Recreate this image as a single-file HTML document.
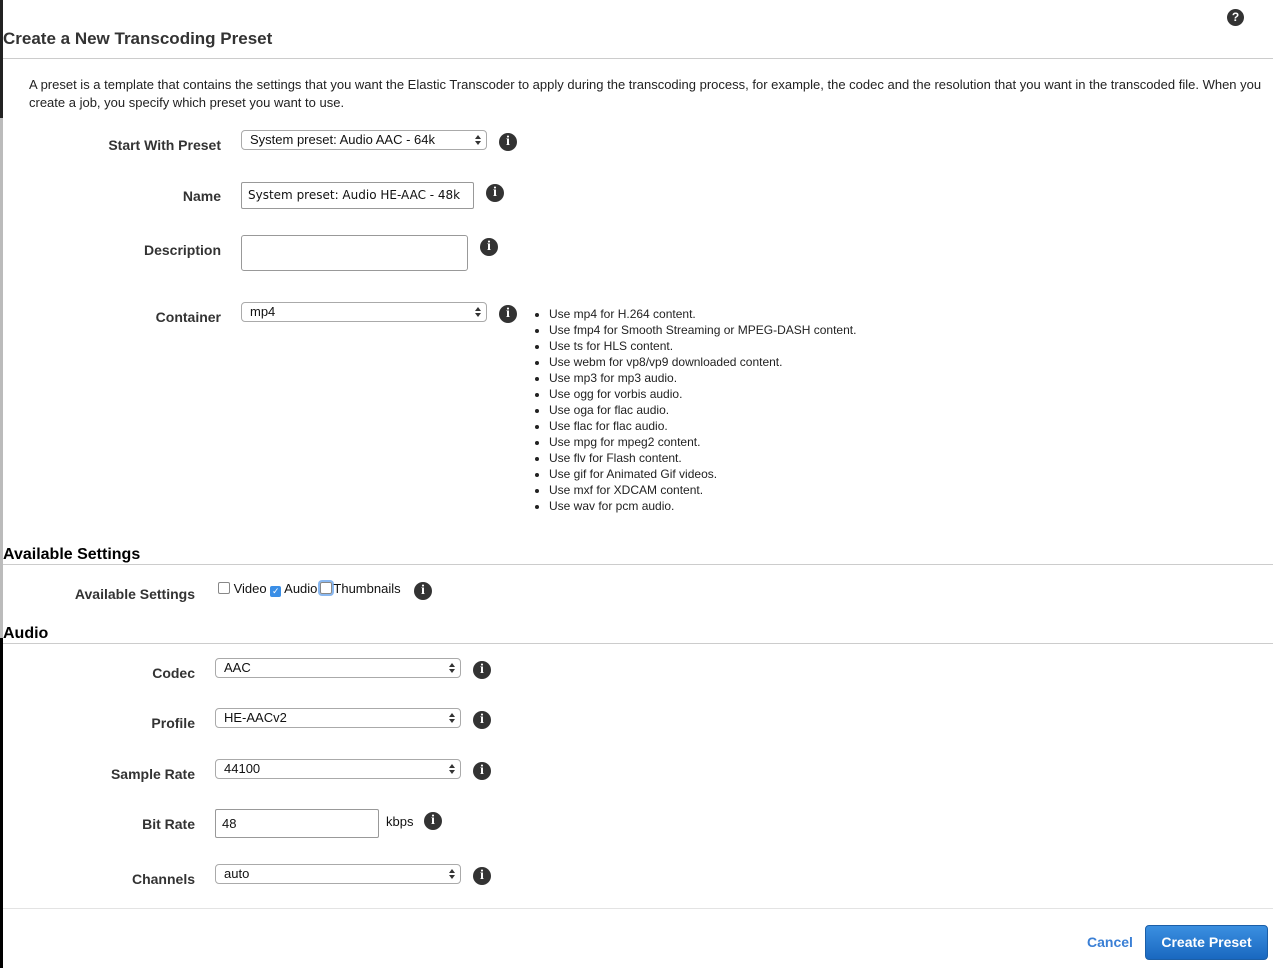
<!DOCTYPE html>
<html><head><meta charset="utf-8"><style>
body{margin:0;width:1273px;height:968px;background:#fff;position:relative;overflow:hidden;font-family:"Liberation Sans",Arial,sans-serif;color:#333}
.a{position:absolute}
.lbl{position:absolute;font-weight:bold;font-size:14px;text-align:right;color:#333}
.sel{position:absolute;box-sizing:border-box;height:20px;border:1px solid #aaa;border-radius:4px;background:#fff;font-size:13px;padding:1px 8px;color:#111;line-height:16px}
.sel:after{content:"";position:absolute;right:5px;top:4px;width:0;height:0;border-left:3px solid transparent;border-right:3px solid transparent;border-bottom:4px solid #333}
.sel:before{content:"";position:absolute;right:5px;top:10px;width:0;height:0;border-left:3px solid transparent;border-right:3px solid transparent;border-top:4px solid #333}
.inp{position:absolute;box-sizing:border-box;border:1px solid #999;border-radius:2px;background:#fff;font-size:13px;padding:0 6px;color:#111}
.i{position:absolute;width:18px;height:18px;border-radius:50%;background:#333;color:#fff;font:bold 14px/18px "Liberation Serif",serif;text-align:center}
.hr{position:absolute;left:3px;right:0;height:1px;background:#ccc}
.h{position:absolute;left:3px;font-weight:bold;font-size:16px;color:#000}
ul{position:absolute;margin:0;padding:0 0 0 20px;font-size:12px;line-height:16px;color:#222}
</style></head><body>
<div class="a" style="left:0;top:0;width:3px;height:118px;background:#222"></div>
<div class="a" style="left:0;top:118px;width:3px;height:520px;background:#bbb"></div>
<div class="a" style="left:0;top:638px;width:3px;height:330px;background:#000"></div>
<div class="a" style="left:1227px;top:9px;width:17px;height:17px;border-radius:50%;background:#333;color:#fff;font:bold 12px/17px 'Liberation Sans',sans-serif;text-align:center">?</div>
<div class="a" style="left:3px;top:29px;font-weight:bold;font-size:17px;color:#333">Create a New Transcoding Preset</div>
<div class="hr" style="top:58px"></div>
<div class="a" style="left:29px;top:76px;width:1240px;font-size:13px;line-height:18px;color:#222">A preset is a template that contains the settings that you want the Elastic Transcoder to apply during the transcoding process, for example, the codec and the resolution that you want in the transcoded file. When you create a job, you specify which preset you want to use.</div>

<div class="lbl" style="left:0;width:221px;top:137px">Start With Preset</div>
<div class="sel" style="left:241px;top:130px;width:246px">System preset: Audio AAC - 64k</div>
<div class="i" style="left:499px;top:133px">i</div>

<div class="lbl" style="left:0;width:221px;top:188px">Name</div>
<div class="inp" style="left:241px;top:182px;width:233px;height:27px;line-height:25px;font-family:'DejaVu Sans',sans-serif;font-size:12px">System preset: Audio HE-AAC - 48k</div>
<div class="i" style="left:486px;top:184px">i</div>

<div class="lbl" style="left:0;width:221px;top:242px">Description</div>
<div class="inp" style="left:241px;top:235px;width:227px;height:36px;border-radius:3px"></div>
<div class="i" style="left:480px;top:238px">i</div>

<div class="lbl" style="left:0;width:221px;top:309px">Container</div>
<div class="sel" style="left:241px;top:302px;width:246px">mp4</div>
<div class="i" style="left:499px;top:305px">i</div>
<ul style="left:529px;top:306px">
<li>Use mp4 for H.264 content.</li><li>Use fmp4 for Smooth Streaming or MPEG-DASH content.</li><li>Use ts for HLS content.</li><li>Use webm for vp8/vp9 downloaded content.</li><li>Use mp3 for mp3 audio.</li><li>Use ogg for vorbis audio.</li><li>Use oga for flac audio.</li><li>Use flac for flac audio.</li><li>Use mpg for mpeg2 content.</li><li>Use flv for Flash content.</li><li>Use gif for Animated Gif videos.</li><li>Use mxf for XDCAM content.</li><li>Use wav for pcm audio.</li></ul>

<div class="h" style="top:546px">Available Settings</div>
<div class="hr" style="top:564px"></div>
<div class="lbl" style="left:0;width:195px;top:586px">Available Settings</div>
<div class="a" style="left:218px;top:581px;font-size:13px;color:#111;white-space:nowrap">
<span style="display:inline-block;width:10px;height:10px;border:1px solid #888;border-radius:2px;vertical-align:-1px"></span> Video <span style="display:inline-block;width:11px;height:11px;background:#3a8ee6;border-radius:2px;vertical-align:-1px;color:#fff;font-size:9px;line-height:11px;text-align:center">✓</span> Audio<span style="display:inline-block;width:10px;height:10px;border:1px solid #888;border-radius:2px;vertical-align:-1px;box-shadow:0 0 0 2px #8ab8f0;margin:0 1px 0 3px"></span>Thumbnails</div>
<div class="i" style="left:414px;top:582px">i</div>

<div class="h" style="top:625px">Audio</div>
<div class="hr" style="top:643px"></div>

<div class="lbl" style="left:0;width:195px;top:665px">Codec</div>
<div class="sel" style="left:215px;top:658px;width:246px">AAC</div>
<div class="i" style="left:473px;top:661px">i</div>

<div class="lbl" style="left:0;width:195px;top:715px">Profile</div>
<div class="sel" style="left:215px;top:708px;width:246px">HE-AACv2</div>
<div class="i" style="left:473px;top:711px">i</div>

<div class="lbl" style="left:0;width:195px;top:766px">Sample Rate</div>
<div class="sel" style="left:215px;top:759px;width:246px">44100</div>
<div class="i" style="left:473px;top:762px">i</div>

<div class="lbl" style="left:0;width:195px;top:816px">Bit Rate</div>
<div class="inp" style="left:215px;top:809px;width:164px;height:29px;line-height:27px">48</div>
<div class="a" style="left:386px;top:814px;font-size:13px;color:#111">kbps</div>
<div class="i" style="left:424px;top:812px">i</div>

<div class="lbl" style="left:0;width:195px;top:871px">Channels</div>
<div class="sel" style="left:215px;top:864px;width:246px">auto</div>
<div class="i" style="left:473px;top:867px">i</div>

<div class="hr" style="top:908px;background:#e3e3e3"></div>
<div class="a" style="left:1087px;top:934px;font-weight:bold;font-size:14px;color:#3a7fd5">Cancel</div>
<div class="a" style="left:1145px;top:925px;width:123px;height:35px;box-sizing:border-box;border:1px solid #1b5fa8;border-radius:4px;background:linear-gradient(#3b8fe0,#1a68c0);color:#fff;font-weight:bold;font-size:14px;line-height:33px;text-align:center">Create Preset</div>
</body></html>
